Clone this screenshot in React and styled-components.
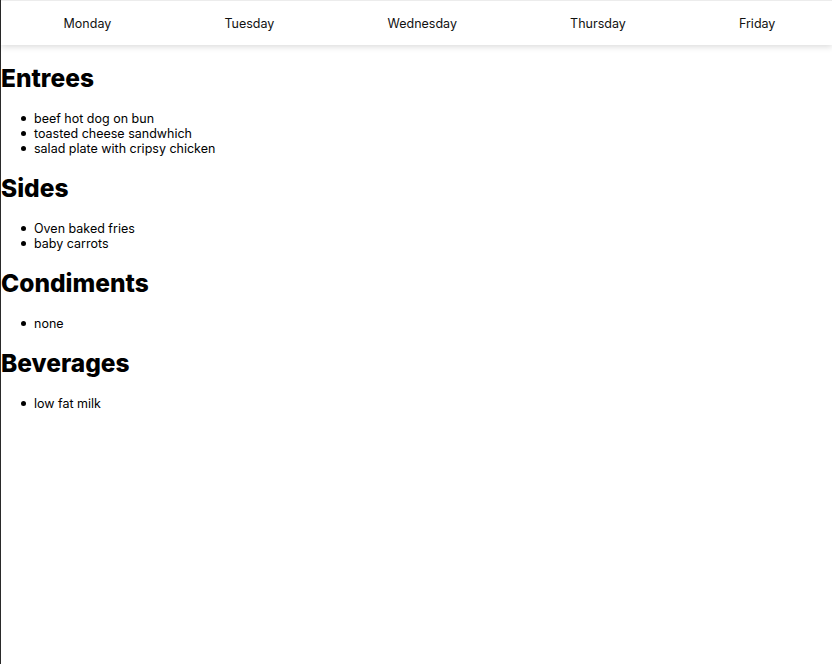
import React from 'react';
import styled, { createGlobalStyle } from 'styled-components';

const days = ['Monday', 'Tuesday', 'Wednesday', 'Thursday', 'Friday'];

const menu = [
  { title: 'Entrees', items: ['beef hot dog on bun', 'toasted cheese sandwhich', 'salad plate with cripsy chicken'] },
  { title: 'Sides', items: ['Oven baked fries', 'baby carrots'] },
  { title: 'Condiments', items: ['none'] },
  { title: 'Beverages', items: ['low fat milk'] },
];

export default function App() {
  return (
    <Page>
      <GlobalStyle />
      <DayBar>
        {days.map(day => (
          <DayTab key={day}>{day}</DayTab>
        ))}
      </DayBar>
      <Content>
        {menu.map(section => (
          <section key={section.title}>
            <SectionTitle>{section.title}</SectionTitle>
            <ItemList>
              {section.items.map(item => (
                <Item key={item}>{item}</Item>
              ))}
            </ItemList>
          </section>
        ))}
      </Content>
    </Page>
  );
}

// Styles

const GlobalStyle = createGlobalStyle`
  html, body {
    margin: 0;
    padding: 0;
    background: #fff;
  }
  body {
    font-family: Inter, "Liberation Sans", sans-serif;
    color: #000;
  }
`;

const Page = styled.div`
  min-height: 664px;
  border-left: 1px solid #2a2a2a;
  box-sizing: border-box;
`;

const DayBar = styled.nav`
  display: flex;
  justify-content: space-around;
  align-items: center;
  height: 44px;
  padding-left: 6px;
  border-top: 1px solid #ececec;
  background: #fff;
  box-shadow: 0 2px 6px rgba(0, 0, 0, 0.14);
`;

const DayTab = styled.div`
  font-size: 12.5px;
  color: #111;
`;

const Content = styled.main`
  padding: 1px 0 0 0;
`;

const SectionTitle = styled.h1`
  font-size: 24.5px;
  font-weight: 800;
  line-height: 29px;
  margin: 18px 0;
`;

const ItemList = styled.ul`
  list-style: none;
  margin: 18px 0;
  padding-left: 33px;
`;

const Item = styled.li`
  position: relative;
  font-size: 12.5px;
  line-height: 15px;

  &::before {
    content: '';
    position: absolute;
    left: -13px;
    top: 5px;
    width: 5px;
    height: 5px;
    border-radius: 50%;
    background: #000;
  }
`;
